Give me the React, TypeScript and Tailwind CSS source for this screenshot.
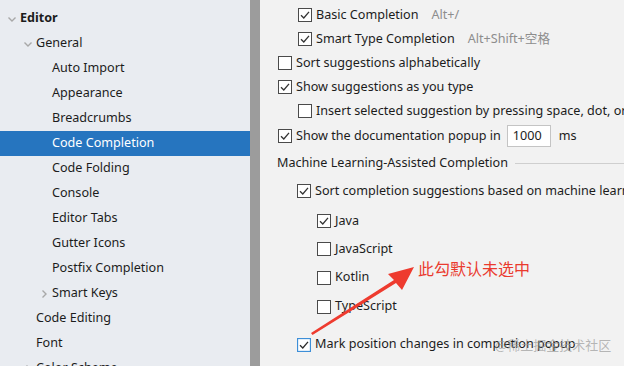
import React from 'react';

const FONT = { fontFamily: '"Noto Sans", "Noto Sans CJK SC", sans-serif' };

type Item = { label: string; indent: number; chevron?: 'down' | 'right'; bold?: boolean; selected?: boolean };

const TREE: Item[] = [
  { label: 'Keymap', indent: 20 },
  { label: 'Editor', indent: 20, chevron: 'down', bold: true },
  { label: 'General', indent: 36, chevron: 'down' },
  { label: 'Auto Import', indent: 52 },
  { label: 'Appearance', indent: 52 },
  { label: 'Breadcrumbs', indent: 52 },
  { label: 'Code Completion', indent: 52, selected: true },
  { label: 'Code Folding', indent: 52 },
  { label: 'Console', indent: 52 },
  { label: 'Editor Tabs', indent: 52 },
  { label: 'Gutter Icons', indent: 52 },
  { label: 'Postfix Completion', indent: 52 },
  { label: 'Smart Keys', indent: 52, chevron: 'right' },
  { label: 'Code Editing', indent: 36 },
  { label: 'Font', indent: 36 },
  { label: 'Color Scheme', indent: 36, chevron: 'right' },
];

function Chevron({ dir }: { dir: 'down' | 'right' }) {
  return (
    <svg width="10" height="10" viewBox="0 0 10 10" className="shrink-0">
      {dir === 'down' ? (
        <path d="M1.5 3.5 L5 7 L8.5 3.5" fill="none" stroke="#a8a8a8" strokeWidth="1.4" />
      ) : (
        <path d="M3.5 1.5 L7 5 L3.5 8.5" fill="none" stroke="#a8a8a8" strokeWidth="1.4" />
      )}
    </svg>
  );
}

function Box({ checked, focus }: { checked?: boolean; focus?: boolean }) {
  return (
    <svg width="14" height="14" viewBox="0 0 14 14" className="shrink-0">
      <rect x="0.5" y="0.5" width="13" height="13" fill="#ffffff" stroke={focus ? '#3d8fd8' : '#4a4a4a'} strokeWidth={focus ? 1.3 : 1} />
      {checked && (
        <path d="M3 7.2 L5.8 10 L11 3.8" fill="none" stroke={focus ? '#2b2b2b' : '#333333'} strokeWidth="1.3" />
      )}
    </svg>
  );
}

function Row({ x, h, checked, focus, children }: { x: number; h: string; checked?: boolean; focus?: boolean; children: React.ReactNode }) {
  return (
    <div className={`flex items-center gap-[4px] ${h}`} style={{ paddingLeft: x }}>
      <Box checked={checked} focus={focus} />
      {children}
    </div>
  );
}

export default function App() {
  return (
    <div className="w-[624px] h-[366px] overflow-hidden flex text-[12.6px] text-[#1c1c1c] relative" style={FONT}>
      {/* sidebar tree */}
      <div className="w-[250px] h-full bg-[#e9ecf1] overflow-hidden">
        <div className="-mt-[19px] flex flex-col">
          {TREE.map((it) => (
            <div
              key={it.label}
              className={`h-[25px] flex items-center relative ${it.selected ? 'bg-[#2675bf] text-white' : ''} ${it.bold ? 'font-bold' : ''}`}
              style={{ paddingLeft: it.indent }}
            >
              {it.chevron && (
                <span className="absolute top-[8px]" style={{ left: it.indent - 13 }}>
                  <Chevron dir={it.chevron} />
                </span>
              )}
              {it.label}
            </div>
          ))}
        </div>
      </div>
      <div className="w-[10px] h-full bg-[#9c9c9c]" />

      {/* settings panel */}
      <div className="flex-1 h-full bg-[#f2f2f2] flex flex-col pt-[3px] whitespace-nowrap overflow-hidden">
        <Row x={38} h="h-[24px]" checked>
          <span>Basic Completion</span>
          <span className="ml-[9px] text-[#8d8d8d]">Alt+/</span>
        </Row>
        <Row x={38} h="h-[24px]" checked>
          <span>Smart Type Completion</span>
          <span className="ml-[9px] text-[#8d8d8d]">Alt+Shift+空格</span>
        </Row>
        <Row x={18} h="h-[24px]">
          <span>Sort suggestions alphabetically</span>
        </Row>
        <Row x={18} h="h-[24px]" checked>
          <span>Show suggestions as you type</span>
        </Row>
        <Row x={38} h="h-[24px]">
          <span>Insert selected suggestion by pressing space, dot, or other context-dependent keys</span>
        </Row>
        <Row x={18} h="h-[26px]" checked>
          <span>Show the documentation popup in</span>
          <span className="ml-[2px] w-[44px] h-[22px] bg-white border border-[#c4c4c4] flex items-center pl-[5px]">1000</span>
          <span className="ml-[4px]">ms</span>
        </Row>
        <div className="h-[28px] flex items-center pl-[17px] gap-[7px]">
          <span>Machine Learning-Assisted Completion</span>
          <div className="flex-1 h-px bg-[#cfcfcf]" />
        </div>
        <Row x={37} h="h-[28px]" checked>
          <span>Sort completion suggestions based on machine learning</span>
        </Row>
        <div className="h-[2px]" />
        <Row x={57} h="h-[28px]" checked>
          <span>Java</span>
        </Row>
        <Row x={57} h="h-[28px]">
          <span>JavaScript</span>
        </Row>
        <Row x={57} h="h-[29px]">
          <span>Kotlin</span>
        </Row>
        <Row x={57} h="h-[29px]">
          <span>TypeScript</span>
        </Row>
        <div className="h-[9px]" />
        <Row x={37} h="h-[29px]" checked focus>
          <span>Mark position changes in completion popup</span>
        </Row>
      </div>

      {/* annotation overlay */}
      <svg className="absolute left-0 top-0 pointer-events-none" width="624" height="366" viewBox="0 0 624 366">
        <path d="M311 333 L312.5 335 L396 283 L402 290 L414 267 L388 274 L394 280 Z" fill="#ee3b2f" />
      </svg>
      <span className="absolute left-[418px] top-[260px] text-[16px] text-[#ea3a2e] leading-none whitespace-nowrap" style={{ fontFamily: '"Noto Sans CJK SC", sans-serif' }}>
        此勾默认未选中
      </span>
      <span className="absolute left-[495px] top-[338px] text-[13px] text-[#9a9a9a]/70 leading-none whitespace-nowrap" style={{ fontFamily: '"Noto Sans CJK SC", sans-serif' }}>
        @稀土掘金技术社区
      </span>
    </div>
  );
}
